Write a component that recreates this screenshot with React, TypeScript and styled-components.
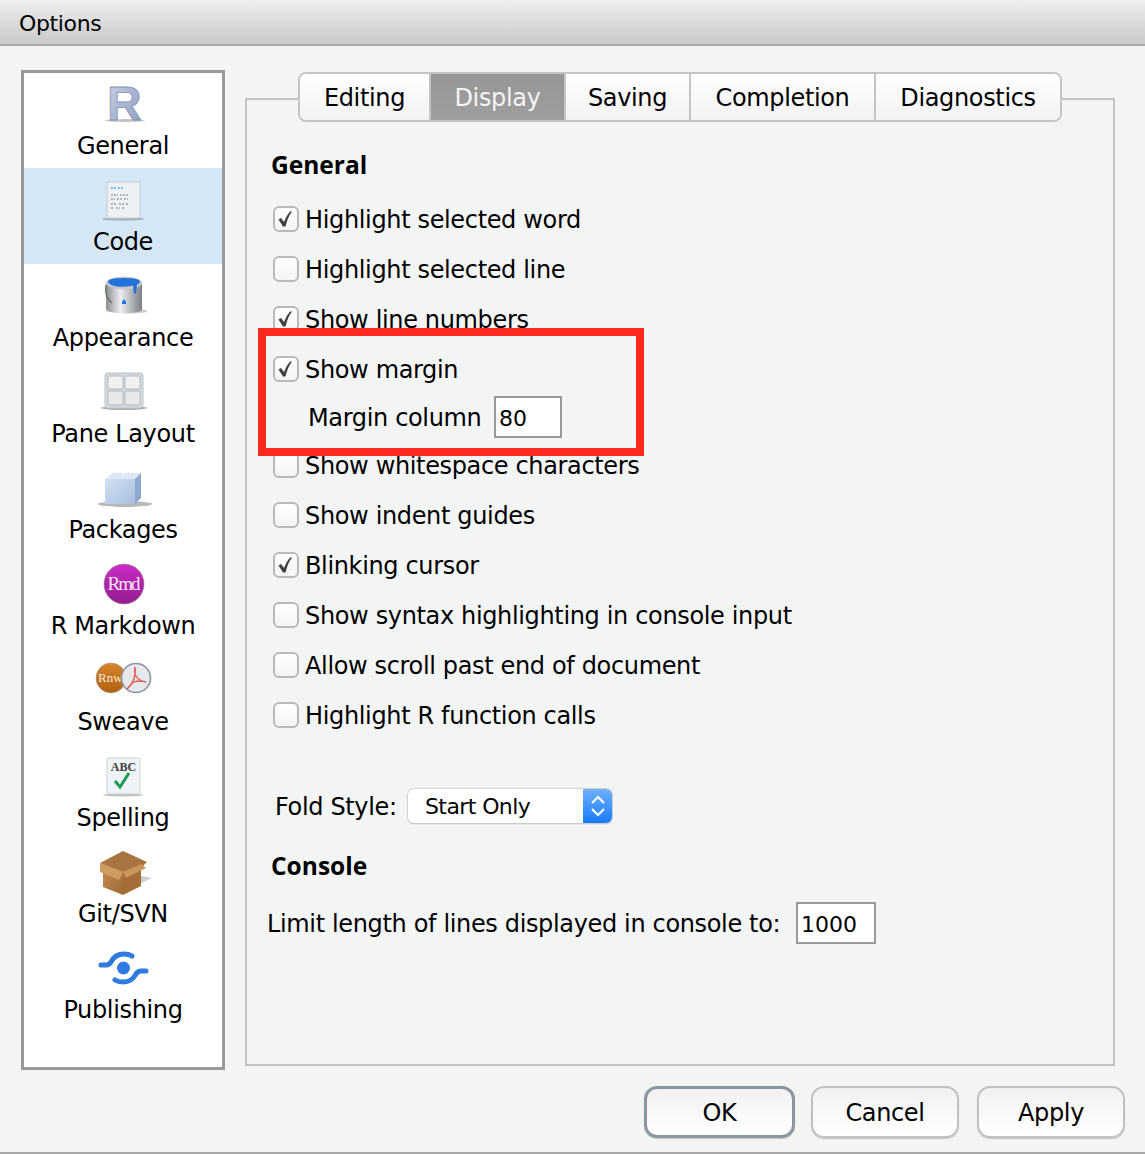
import React from 'react';
import styled, { createGlobalStyle } from 'styled-components';

const GlobalStyle = createGlobalStyle`
  html, body {
    margin: 0;
    padding: 0;
    background: #f3f5f5;
  }
  * {
    box-sizing: border-box;
  }
`;

const Window = styled.div`
  width: 1145px;
  height: 1154px;
  display: flex;
  flex-direction: column;
  background: #f3f5f5;
  color: #000;
  font-family: "DejaVu Sans", "Liberation Sans", sans-serif;
  font-size: 24px;
  letter-spacing: -0.35px;
  overflow: hidden;
`;

const TitleBar = styled.div`
  height: 46px;
  padding: 2px 0 0 19px;
  display: flex;
  align-items: center;
  font-size: 22px;
  background: linear-gradient(#eeeeee, #c9c9c9);
  border-bottom: 2px solid #a9a9a9;
`;

const Body = styled.div`
  display: flex;
  gap: 20px;
  padding: 24px 0 0 21px;
`;

const Sidebar = styled.div`
  width: 204px;
  height: 1000px;
  flex: none;
  background: #fff;
  border: 3px solid #999;
`;

const NavItem = styled.div<{ $active?: boolean }>`
  height: 96px;
  padding-top: 8px;
  display: flex;
  flex-direction: column;
  align-items: center;
  background: ${({ $active }) => ($active ? '#d5e6f4' : 'transparent')};

  &:first-child {
    margin-top: -1px;
  }

  svg {
    display: block;
    flex: none;
    overflow: visible;
  }
`;

const NavLabel = styled.div`
  height: 36px;
  line-height: 36px;
  white-space: nowrap;
`;

const Panel = styled.div`
  position: relative;
  width: 870px;
  height: 968px;
  margin-top: 28px;
  flex: none;
  padding: 0 0 0 26px;
  border: 2px solid #c2c4c4;
`;

const TabBar = styled.div`
  width: 764px;
  height: 50px;
  margin: -28px 0 0 25px;
  display: flex;
  background: #fff;
  border: 2px solid #c4c4c4;
  border-radius: 8px;
  overflow: hidden;
`;

const Tab = styled.div<{ $width: number; $active?: boolean }>`
  width: ${({ $width }) => $width}px;
  flex: none;
  padding-top: 2px;
  display: flex;
  align-items: center;
  justify-content: center;
  color: ${({ $active }) => ($active ? '#f4f4f4' : '#000')};
  background: ${({ $active }) =>
    $active ? 'linear-gradient(#969696, #9e9e9e)' : 'linear-gradient(#ffffff, #f2f2f2)'};
  border-right: 2px solid #c4c4c4;

  &:last-child {
    border-right: 0;
  }
`;

const Heading = styled.div<{ $top: number; $bottom?: number }>`
  height: 32px;
  line-height: 30px;
  margin: ${({ $top }) => $top}px 0 ${({ $bottom }) => $bottom ?? 0}px -2px;
  font-family: "Open Sans", "DejaVu Sans", sans-serif;
  font-size: 24.500px;
  font-weight: bold;
  letter-spacing: 0;
`;

const CheckRow = styled.div`
  height: 50px;
  display: flex;
  align-items: center;
  gap: 6px;
  white-space: nowrap;
`;

const CheckBox = styled.div`
  width: 26px;
  height: 26px;
  flex: none;
  background: linear-gradient(#ffffff, #f4f4f4);
  border: 2px solid #b9b9b9;
  border-radius: 6px;

  svg {
    display: block;
  }
`;

const CheckLabel = styled.span`
  padding-top: 2px;
`;

const MarginRow = styled.div`
  height: 46px;
  padding-left: 35px;
  display: flex;
  align-items: center;
  white-space: nowrap;
`;

const FieldLabel = styled.div<{ $width: number }>`
  width: ${({ $width }) => $width}px;
  flex: none;
  padding-top: 2px;
  white-space: nowrap;
`;

const NumberInput = styled.input<{ $width: number }>`
  width: ${({ $width }) => $width}px;
  height: 42px;
  flex: none;
  padding: 2px 0 0 3px;
  font-family: inherit;
  font-size: 22px;
  letter-spacing: 0;
  color: #000;
  background: #fff;
  border: 2px solid #999;
  border-radius: 0;
  outline: none;
`;

const FoldRow = styled.div`
  height: 34px;
  margin: 49px 0 0 2px;
  display: flex;
  align-items: center;
`;

const Select = styled.div`
  width: 204px;
  height: 34px;
  flex: none;
  display: flex;
  align-items: stretch;
  font-size: 22px;
  letter-spacing: -0.6px;
  background: #fff;
  border-radius: 6px;
  box-shadow: 0 0 1px 1px #cfcfcf, 0 1px 1px #aaa;
  overflow: hidden;
`;

const SelectText = styled.div`
  flex: 1;
  padding-left: 17px;
  line-height: 36px;
  white-space: nowrap;
`;

const SelectArrows = styled.div`
  width: 29px;
  flex: none;
  display: flex;
  align-items: center;
  justify-content: center;
  background: linear-gradient(#6fb0fb, #187bfb);
`;

const LimitRow = styled.div`
  height: 42px;
  margin: 19px 0 0 -6px;
  display: flex;
  align-items: center;
`;

const Highlight = styled.div`
  position: absolute;
  left: 11px;
  top: 228px;
  width: 386px;
  height: 128px;
  border: 8px solid #fc2a1f;
  pointer-events: none;
`;

const Footer = styled.div`
  display: flex;
  justify-content: flex-end;
  padding: 16px 20px 0 0;
`;

const Button = styled.div<{ $width: number; $primary?: boolean; $gap?: number }>`
  width: ${({ $width }) => $width}px;
  height: 52px;
  margin-left: ${({ $gap }) => $gap ?? 0}px;
  padding-top: 2px;
  display: flex;
  align-items: center;
  justify-content: center;
  background: linear-gradient(#f1f1f3, #ffffff);
  border: ${({ $primary }) => ($primary ? '3px solid #8b96a3' : '2px solid #c0c0c0')};
  border-radius: 13px;
  box-shadow: 0 1px 1px rgba(0, 0, 0, 0.2);
`;

const BottomEdge = styled.div`
  height: 2px;
  margin-top: auto;
  background: #a6a8a8;
`;

// toolbar-sized icons, all drawn on the same 60x48 grid
const Icon: React.FC<{ children: React.ReactNode }> = ({ children }) => (
  <svg width="60" height="48" viewBox="0 0 60 48">
    {children}
  </svg>
);

const RIcon = () => (
  <Icon>
    <defs>
      <linearGradient id="rFill" x1="0" y1="0" x2="1" y2="1">
        <stop offset="0" stopColor="#c9d2e6" />
        <stop offset="1" stopColor="#8c9cc0" />
      </linearGradient>
    </defs>
    <ellipse cx="32" cy="40.500" rx="20" ry="1.500" fill="#999" opacity="0.6" />
    <text x="14" y="40" fontFamily="'Liberation Sans', sans-serif" fontWeight="bold" fontSize="48" letterSpacing="0" fill="url(#rFill)" stroke="#8391b4" strokeWidth="0.8">
      R
    </text>
  </Icon>
);

const CodeIcon = () => (
  <Icon>
    <ellipse cx="30" cy="43" rx="21" ry="1.600" fill="#8f9aa5" opacity="0.7" />
    <rect x="14" y="6" width="33" height="36" fill="#eef1f4" stroke="#c6ccd2" />
    <path d="M18 12h5m2 0h5" stroke="#49b3ef" strokeWidth="1.500" strokeDasharray="2 1" />
    <path d="M18 19h7m2 0h9M18 23h4m2 0h5m2 0h4M18 28h6m2 0h5m2 0h2M18 32h3m2 0h4m2 0h3" stroke="#9a9fa5" strokeWidth="1.500" strokeDasharray="2 1" />
  </Icon>
);

const BucketIcon = () => (
  <Icon>
    <defs>
      <linearGradient id="canFill" x1="0" y1="0" x2="1" y2="0">
        <stop offset="0" stopColor="#8c8f92" />
        <stop offset="0.4" stopColor="#eceef0" />
        <stop offset="1" stopColor="#7d8084" />
      </linearGradient>
    </defs>
    <ellipse cx="36" cy="39" rx="18" ry="2.500" fill="#a8a8a8" opacity="0.6" />
    <path d="M13 11v26q0 4 18 4t18-4V11z" fill="url(#canFill)" />
    <ellipse cx="31" cy="11" rx="18" ry="6.500" fill="#c4c8cc" />
    <path d="M15 10q0-4 16-4t16 4q-1 2-3 2.500l-1 9-2 0-1-8q-8 2-16 1-7-1-9-4.500z" fill="#2272dc" />
    <path d="M31 27l2 3v2h-4v-2z" fill="#2272dc" />
    <path d="M13 13q-2 12 6 18" fill="none" stroke="#666" strokeWidth="1.200" />
  </Icon>
);

const PaneIcon = () => (
  <Icon>
    <ellipse cx="31" cy="40" rx="23" ry="2" fill="#8d8d8d" opacity="0.7" />
    <rect x="12" y="5" width="38" height="35" rx="3" fill="#d4d9de" stroke="#bcc2c8" />
    <rect x="15" y="8" width="15" height="13" rx="1" fill="#eef0f2" stroke="#b4bac0" />
    <rect x="32" y="8" width="15" height="13" rx="1" fill="#eef0f2" stroke="#b4bac0" />
    <rect x="15" y="23" width="15" height="14" rx="1" fill="#e6e8ea" stroke="#b4bac0" />
    <rect x="32" y="23" width="15" height="14" rx="1" fill="#e6e8ea" stroke="#b4bac0" />
  </Icon>
);

const PackageIcon = () => (
  <Icon>
    <defs>
      <linearGradient id="cubeFront" x1="0" y1="0" x2="1" y2="1">
        <stop offset="0" stopColor="#d2e0f2" />
        <stop offset="1" stopColor="#a9bfe0" />
      </linearGradient>
    </defs>
    <ellipse cx="32" cy="40" rx="27" ry="3" fill="#9a9a9a" opacity="0.7" />
    <path d="M12 15h30v25H12z" fill="url(#cubeFront)" />
    <path d="M12 15l8-6h28l-6 6z" fill="#dce8f6" />
    <path d="M42 15l6-6v25l-6 6z" fill="#8fa8d2" />
    <path d="M29 13l3-3" stroke="#fff" strokeWidth="1" />
  </Icon>
);

const RmdIcon = () => (
  <Icon>
    <defs>
      <linearGradient id="rmdFill" x1="0" y1="0" x2="0" y2="1">
        <stop offset="0" stopColor="#cc2cc6" />
        <stop offset="1" stopColor="#931b92" />
      </linearGradient>
    </defs>
    <circle cx="31" cy="24" r="20" fill="url(#rmdFill)" stroke="#8d8d8d" strokeWidth="0.6" />
    <text x="31" y="30" textAnchor="middle" fontFamily="'Liberation Serif', serif" fontSize="19" letterSpacing="0" fill="#f6e6f6" textLength="33">
      Rmd
    </text>
  </Icon>
);

const SweaveIcon = () => (
  <Icon>
    <defs>
      <linearGradient id="rnwFill" x1="0" y1="0" x2="0" y2="1">
        <stop offset="0" stopColor="#d8842a" />
        <stop offset="1" stopColor="#b0620f" />
      </linearGradient>
    </defs>
    <circle cx="18" cy="22" r="15" fill="url(#rnwFill)" stroke="#999" strokeWidth="0.6" />
    <text x="5" y="26" fontFamily="'Liberation Serif', serif" fontSize="13" letterSpacing="0" fill="#f7e8d4">
      Rnw
    </text>
    <circle cx="43" cy="22" r="14.500" fill="#e6e8ec" stroke="#8d949e" strokeWidth="1.600" />
    <path d="M42 11q-1 6 1 9 3 5 10 6-6-2-12 0-4 2-7 7 4-3 6-8 3-6 2-14z" fill="none" stroke="#e2524b" strokeWidth="1.300" />
  </Icon>
);

const SpellingIcon = () => (
  <Icon>
    <ellipse cx="30" cy="43" rx="20" ry="1.500" fill="#9ba2a8" opacity="0.7" />
    <rect x="14" y="6" width="33" height="36" rx="1" fill="#eff3f5" stroke="#ccd2d6" />
    <text x="30.500" y="19" textAnchor="middle" fontFamily="'Liberation Serif', serif" fontWeight="bold" fontSize="12" letterSpacing="0" fill="#3c3c3c">
      ABC
    </text>
    <path d="M22 29l5 6 9-14" fill="none" stroke="#1f9a52" strokeWidth="3" />
  </Icon>
);

const GitIcon = () => (
  <Icon>
    <defs>
      <linearGradient id="boxFill" x1="0" y1="0" x2="1" y2="1">
        <stop offset="0" stopColor="#c78f52" />
        <stop offset="1" stopColor="#9c6a36" />
      </linearGradient>
    </defs>
    <path d="M38 26l21 4-21 10z" fill="#bcbcbc" opacity="0.7" />
    <path d="M10 15l20 9v23l-20-8z" fill="url(#boxFill)" />
    <path d="M30 24l18-7v21l-18 9z" fill="#a56e36" />
    <path d="M7 15l23-12 24 11-6 6-18 4z" fill="#a87440" />
    <path d="M7 15l23 9-4 8-19-8z" fill="#cf9c62" />
    <path d="M30 24l3 6 20-10-5-4z" fill="#c8955c" />
  </Icon>
);

const PublishIcon = () => (
  <Icon>
    <circle cx="30.500" cy="24" r="6.500" fill="#2f7be0" />
    <path d="M8 21h5q3 0 5-3 4-8 13-8 5 0 8 2" fill="none" stroke="#2f7be0" strokeWidth="5" strokeLinecap="round" />
    <path d="M53 27h-5q-3 0-5 3-4 8-13 8-5 0-8-2" fill="none" stroke="#2f7be0" strokeWidth="5" strokeLinecap="round" />
  </Icon>
);

const navItems = [
  { label: 'General', icon: <RIcon /> },
  { label: 'Code', icon: <CodeIcon />, active: true },
  { label: 'Appearance', icon: <BucketIcon /> },
  { label: 'Pane Layout', icon: <PaneIcon /> },
  { label: 'Packages', icon: <PackageIcon /> },
  { label: 'R Markdown', icon: <RmdIcon /> },
  { label: 'Sweave', icon: <SweaveIcon /> },
  { label: 'Spelling', icon: <SpellingIcon /> },
  { label: 'Git/SVN', icon: <GitIcon /> },
  { label: 'Publishing', icon: <PublishIcon /> },
];

const tabs = [
  { label: 'Editing', width: 131 },
  { label: 'Display', width: 135, active: true },
  { label: 'Saving', width: 125 },
  { label: 'Completion', width: 185 },
  { label: 'Diagnostics', width: 184 },
];

const Check: React.FC<{ label: string; checked?: boolean }> = ({ label, checked }) => (
  <CheckRow>
    <CheckBox>
      {checked && (
        <svg width="22" height="22" viewBox="0 0 22 22">
          <path d="M3.500 11.500l2.500-1.500 3 4q2-6 6-10.500h2q-4.500 6-6.500 15h-2.500z" fill="#3f3f3f" />
        </svg>
      )}
    </CheckBox>
    <CheckLabel>{label}</CheckLabel>
  </CheckRow>
);

export default function App() {
  return (
    <Window>
      <GlobalStyle />
      <TitleBar>Options</TitleBar>
      <Body>
        <Sidebar>
          {navItems.map((item) => (
            <NavItem key={item.label} $active={item.active}>
              {item.icon}
              <NavLabel>{item.label}</NavLabel>
            </NavItem>
          ))}
        </Sidebar>
        <Panel>
          <TabBar>
            {tabs.map((tab) => (
              <Tab key={tab.label} $width={tab.width} $active={tab.active}>
                {tab.label}
              </Tab>
            ))}
          </TabBar>
          <Heading $top={28} $bottom={12}>General</Heading>
          <Check label="Highlight selected word" checked />
          <Check label="Highlight selected line" />
          <Check label="Show line numbers" checked />
          <Check label="Show margin" checked />
          <MarginRow>
            <FieldLabel $width={186}>Margin column</FieldLabel>
            <NumberInput $width={68} defaultValue="80" />
          </MarginRow>
          <Check label="Show whitespace characters" />
          <Check label="Show indent guides" />
          <Check label="Blinking cursor" checked />
          <Check label="Show syntax highlighting in console input" />
          <Check label="Allow scroll past end of document" />
          <Check label="Highlight R function calls" />
          <FoldRow>
            <FieldLabel $width={133}>Fold Style:</FieldLabel>
            <Select>
              <SelectText>Start Only</SelectText>
              <SelectArrows>
                <svg width="18" height="26" viewBox="0 0 18 26">
                  <path d="M3 10l6-6 6 6M3 16l6 6 6-6" fill="none" stroke="#fff" strokeWidth="2.200" />
                </svg>
              </SelectArrows>
            </Select>
          </FoldRow>
          <Heading $top={28}>Console</Heading>
          <LimitRow>
            <FieldLabel $width={529}>Limit length of lines displayed in console to:</FieldLabel>
            <NumberInput $width={80} defaultValue="1000" />
          </LimitRow>
          <Highlight />
        </Panel>
      </Body>
      <Footer>
        <Button $width={151} $primary>OK</Button>
        <Button $width={148} $gap={16}>Cancel</Button>
        <Button $width={148} $gap={18}>Apply</Button>
      </Footer>
      <BottomEdge />
    </Window>
  );
}
